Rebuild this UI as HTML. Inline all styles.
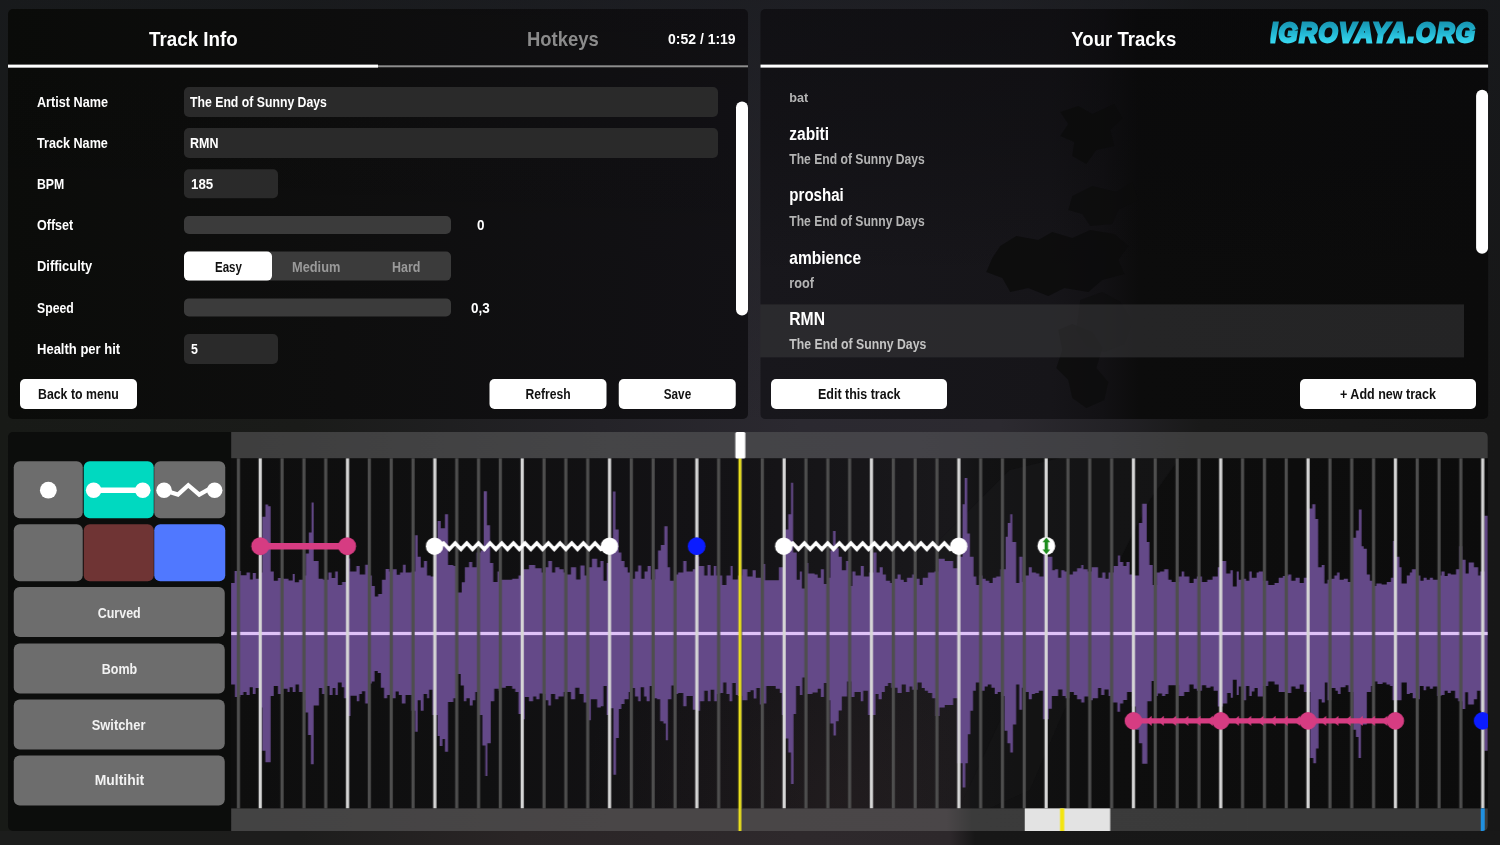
<!DOCTYPE html>
<html lang="en"><head><meta charset="utf-8"><title>Track Editor</title>
<style>
html,body{margin:0;padding:0}
body{width:1500px;height:845px;overflow:hidden;background:#1b1b1b;font-family:"Liberation Sans",sans-serif;font-weight:bold;position:relative}
#bg{position:absolute;left:0;top:0;width:1500px;height:845px;background:
 linear-gradient(180deg,rgba(24,26,30,.7) 0,rgba(24,26,30,.35) 200px,rgba(24,26,30,0) 425px),
 linear-gradient(90deg,#181a17 0,#1a1b19 300px,#242328 600px,#2b2930 800px,#2c2a30 1000px,#222125 1120px,#191919 1200px,#171717 1500px)}
#bgb{position:absolute;left:0;top:831px;width:1500px;height:14px;background:linear-gradient(90deg,#1c1d1c 0,#1d1d1c 300px,#2a2526 520px,#2e292c 800px,#2d282b 950px,#171717 975px,#181818 1500px)}
section,div,span.t,span.wm{position:absolute;box-sizing:border-box}
.panel{background:linear-gradient(180deg,rgba(0,0,0,.1) 0,rgba(0,0,0,0) 70%),linear-gradient(90deg,#0b0c0a 0,#0e0e0e 45%,#121115 100%);border-radius:5px;overflow:hidden}
.p2{background:linear-gradient(180deg,rgba(8,8,10,.45) 0,rgba(8,8,10,.3) 30%,rgba(8,8,10,0) 65%),linear-gradient(90deg,#18171c 0,#161519 40%,#121114 47%,#0c0c0c 52%,#0b0b0b 100%)}
.p3{background:#0c0d0c}
.t{white-space:nowrap;line-height:1;transform-origin:0 0;color:#fff;display:block}
.ln2{background:#8d8d8d}
.ln3{background:#fff}
.inp{background:#2a2a2a;border-radius:5px}
.sld{background:#3b3b3b;border-radius:5px}
.segs{background:#3b3b3b;border-radius:5px}
.seg.on{background:#fff;border-radius:5px}
.btn{background:#fff;border-radius:5px}
.scr{background:#fff;border-radius:6px}
.sel{background:rgba(58,58,60,.55)}
.tb{background:#6d6d6d;border-radius:6px}
.tb svg,.tree{position:absolute;left:0;top:0}
.tl svg{position:absolute;left:0;top:0}
.wm{font-style:italic;font-size:26.5px;line-height:1.3;letter-spacing:1.6px;white-space:nowrap;
 background:linear-gradient(180deg,#1896b2 22%,#22b4d0 50%,#38daf2 80%);-webkit-background-clip:text;background-clip:text;color:transparent;
 -webkit-text-stroke:2.6px transparent;transform-origin:0 0;transform:scale(.927,1.075)}
</style></head>
<body><div id="bg"></div><div id="bgb"></div>
<section class="panel" style="left:8px;top:9px;width:740px;height:410px;"><span class="t" style="left:140.75px;top:19.42px;font-size:21px;transform:scaleX(0.8948);">Track Info</span><span class="t" style="left:519.00px;top:19.42px;font-size:21px;color:#8b8b8b;transform:scaleX(0.8783);">Hotkeys</span><span class="t" style="left:660.00px;top:22.70px;font-size:14.3px;transform:scaleX(0.9783);">0:52 / 1:19</span><div class="ln2" style="left:0px;top:56px;width:740px;height:2px;transform:translate(0.00px,0.30px);"></div><div class="ln3" style="left:0px;top:55px;width:370px;height:3px;transform:translate(0.00px,0.60px);"></div><span class="t lab" style="left:29.20px;top:85.64px;font-size:14.6px;transform:scaleX(0.8658);">Artist Name</span><span class="t lab" style="left:29.20px;top:126.84px;font-size:14.6px;transform:scaleX(0.8651);">Track Name</span><span class="t lab" style="left:29.20px;top:168.04px;font-size:14.6px;transform:scaleX(0.8400);">BPM</span><span class="t lab" style="left:29.20px;top:209.24px;font-size:14.6px;transform:scaleX(0.8592);">Offset</span><span class="t lab" style="left:29.20px;top:250.44px;font-size:14.6px;transform:scaleX(0.8839);">Difficulty</span><span class="t lab" style="left:29.20px;top:291.64px;font-size:14.6px;transform:scaleX(0.8387);">Speed</span><span class="t lab" style="left:29.20px;top:332.84px;font-size:14.6px;transform:scaleX(0.8915);">Health per hit</span><div class="inp" style="left:176px;top:78px;width:534px;height:30px;"><span class="t" style="left:6.30px;top:7.64px;font-size:14.6px;transform:scaleX(0.8401);">The End of Sunny Days</span></div><div class="inp" style="left:176px;top:119px;width:534px;height:30px;"><span class="t" style="left:6.30px;top:7.74px;font-size:14.6px;transform:scaleX(0.8540);">RMN</span></div><div class="inp" style="left:176px;top:160px;width:94px;height:29px;transform:translate(0.00px,0.30px);"><span class="t" style="left:6.80px;top:7.64px;font-size:14.6px;transform:scaleX(0.9108);">185</span></div><div class="sld" style="left:176px;top:207px;width:267px;height:18px;"></div><span class="t" style="left:468.75px;top:209.24px;font-size:14.6px;transform:scaleX(0.9231);">0</span><div class="segs" style="left:176px;top:242px;width:267px;height:29px;transform:translate(0.00px,0.60px);"><div class="seg on" style="left:0px;top:0px;width:88px;height:29px;"><span class="t" style="left:30.50px;top:7.94px;font-size:14.6px;color:#111;transform:scaleX(0.7898);">Easy</span></div><span class="t" style="left:108.00px;top:7.94px;font-size:14.6px;color:#9a9a9a;transform:scaleX(0.8778);">Medium</span><span class="t" style="left:207.50px;top:7.94px;font-size:14.6px;color:#9a9a9a;transform:scaleX(0.8555);">Hard</span></div><div class="sld" style="left:176px;top:289px;width:267px;height:18px;transform:translate(0.00px,0.40px);"></div><span class="t" style="left:463.25px;top:291.64px;font-size:14.6px;transform:scaleX(0.9231);">0,3</span><div class="inp" style="left:176px;top:325px;width:94px;height:30px;"><span class="t" style="left:6.60px;top:7.74px;font-size:14.6px;transform:scaleX(0.8492);">5</span></div><div class="btn" style="left:12px;top:370px;width:117px;height:30px;"><span class="t" style="left:18.00px;top:7.84px;font-size:14.6px;color:#111;transform:scaleX(0.8449);">Back to menu</span></div><div class="btn" style="left:481px;top:370px;width:117px;height:30px;transform:translate(0.50px,0.00px);"><span class="t" style="left:36.00px;top:7.84px;font-size:14.6px;color:#111;transform:scaleX(0.8312);">Refresh</span></div><div class="btn" style="left:610px;top:370px;width:117px;height:30px;transform:translate(0.75px,0.00px);"><span class="t" style="left:45.00px;top:7.84px;font-size:14.6px;color:#111;transform:scaleX(0.8044);">Save</span></div><div class="scr" style="left:728px;top:92px;width:12px;height:214px;transform:translate(0.00px,0.60px);"></div></section>
<section class="panel p2" style="left:760px;top:9px;width:728px;height:410px;transform:translate(0.30px,0.00px);"><span class="t" style="left:310.95px;top:19.42px;font-size:21px;transform:scaleX(0.8847);">Your Tracks</span><div class="ln3" style="left:0px;top:55px;width:728px;height:3px;transform:translate(0.00px,0.60px);"></div><span class="wm" style="left:509.70000000000005px;top:5.1px;">IGROVAYA.ORG</span><svg class="tree" width="727.5" height="410" viewBox="760 9 727.5 410"><g fill="#0c0c0c"><path d="M1060 112l18-6 14 8 22-10 8 14-12 12 4 16-18 4-10 14-14-8 2-14-14-6 8-12z" opacity=".85"/><path d="M1072 196l20-10 24 6 16-10 6 18-20 10-6 14-22 2-8-12-14-4z" opacity=".8"/><path d="M1000 246l16-10 22 4 14-8 20 6 18-8 24 4 14 12-10 14 6 14-22 6-14 12-24-4-16 8-20-8-18 4-8-14-16-6 6-14z" opacity=".85"/><path d="M1080 300l22-8 18 10 12 20-8 22-20 8-18-6-10-16z" opacity=".5"/><path d="M1058 330l14-6 20 8 10 16-6 20 12 14-4 18-18 8-14-10-4-18-12-12 6-18z" opacity=".8"/></g></svg><div class="sel" style="left:-1px;top:295px;width:704px;height:53px;transform:translate(0.70px,0.40px);"></div><span class="t" style="left:28.95px;top:82.31px;font-size:13.1px;color:#b4b4b4;transform:scaleX(0.9651);">bat</span><span class="t" style="left:28.70px;top:115.76px;font-size:18px;transform:scaleX(0.8641);">zabiti</span><span class="t" style="left:28.70px;top:142.78px;font-size:14.2px;color:#b4b4b4;transform:scaleX(0.8552);">The End of Sunny Days</span><span class="t" style="left:28.70px;top:177.16px;font-size:18px;transform:scaleX(0.8385);">proshai</span><span class="t" style="left:28.70px;top:204.98px;font-size:14.2px;color:#b4b4b4;transform:scaleX(0.8552);">The End of Sunny Days</span><span class="t" style="left:28.70px;top:239.66px;font-size:18px;transform:scaleX(0.8638);">ambience</span><span class="t" style="left:28.70px;top:266.68px;font-size:14.2px;color:#b4b4b4;transform:scaleX(0.8939);">roof</span><span class="t" style="left:29.00px;top:301.26px;font-size:18px;transform:scaleX(0.8707);">RMN</span><span class="t" style="left:29.20px;top:328.28px;font-size:14.2px;color:#c4c4c4;transform:scaleX(0.8647);">The End of Sunny Days</span><div class="btn" style="left:10px;top:370px;width:176px;height:30px;transform:translate(0.70px,0.00px);"><span class="t" style="left:47.00px;top:7.84px;font-size:14.6px;color:#111;transform:scaleX(0.8553);">Edit this track</span></div><div class="btn" style="left:539px;top:370px;width:176px;height:30px;transform:translate(0.70px,0.00px);"><span class="t" style="left:40.00px;top:7.84px;font-size:14.6px;color:#111;transform:scaleX(0.8589);">+ Add new track</span></div><div class="scr" style="left:715px;top:80px;width:12px;height:164px;transform:translate(0.80px,0.70px);"></div></section>
<section class="panel p3" style="left:8px;top:432px;width:1480px;height:399px;"><div class="tb" style="left:5px;top:29px;width:69px;height:57px;transform:translate(0.75px,0.20px);"><svg width="70" height="57" viewBox="0 0 70 57"><circle cx="34.6" cy="29" r="8.4" fill="#fff"/></svg></div><div class="tb" style="left:75px;top:29px;width:70px;height:57px;transform:translate(0.75px,0.20px);background:#00d9c0;"><svg width="70" height="57" viewBox="0 0 70 57"><path d="M10 29H59" stroke="#fff" stroke-width="5.4"/><circle cx="9.9" cy="29" r="7.8" fill="#fff"/><circle cx="59" cy="29" r="7.8" fill="#fff"/></svg></div><div class="tb" style="left:146px;top:29px;width:71px;height:57px;transform:translate(0.25px,0.20px);"><svg width="71" height="57" viewBox="0 0 71 57"><path d="M9.8 29L23.7 33.4L34 24L45 33.4L53.8 28.4L60.4 29" stroke="#fff" stroke-width="4.2" fill="none" stroke-linejoin="miter"/><circle cx="9.8" cy="29" r="7.8" fill="#fff"/><circle cx="60.4" cy="29" r="7.8" fill="#fff"/></svg></div><div class="tb" style="left:5px;top:92px;width:69px;height:57px;transform:translate(0.75px,0.20px);"></div><div class="tb" style="left:75px;top:92px;width:70px;height:57px;transform:translate(0.75px,0.20px);background:#6f3434;"></div><div class="tb" style="left:146px;top:92px;width:71px;height:57px;transform:translate(0.25px,0.20px);background:#5078ff;"></div><div class="tb wb" style="left:5px;top:155px;width:211px;height:50px;transform:translate(0.75px,0.00px);"><span class="t" style="left:84.00px;top:18.64px;font-size:14.6px;color:#f2f2f2;transform:scaleX(0.8536);">Curved</span></div><div class="tb wb" style="left:5px;top:211px;width:211px;height:50px;transform:translate(0.75px,0.50px);"><span class="t" style="left:87.50px;top:18.44px;font-size:14.6px;color:#f2f2f2;transform:scaleX(0.8567);">Bomb</span></div><div class="tb wb" style="left:5px;top:267px;width:211px;height:50px;transform:translate(0.75px,0.50px);"><span class="t" style="left:78.25px;top:18.34px;font-size:14.6px;color:#f2f2f2;transform:scaleX(0.8821);">Switcher</span></div><div class="tb wb" style="left:5px;top:323px;width:211px;height:50px;transform:translate(0.75px,0.40px);"><span class="t" style="left:80.50px;top:18.44px;font-size:14.6px;color:#f2f2f2;transform:scaleX(0.9519);">Multihit</span></div><div class="tl" style="left:223.25px;top:0;width:1256.75px;height:399px"><svg width="1256.75" height="399.0" viewBox="231.25 432.0 1256.75 399.0"><defs><linearGradient id="gw" gradientUnits="userSpaceOnUse" x1="231" x2="1488" y1="0" y2="0"><stop offset="0" stop-color="#0e0e0e"/><stop offset=".2" stop-color="#101011"/><stop offset=".37" stop-color="#131215"/><stop offset=".5" stop-color="#171619"/><stop offset=".575" stop-color="#19181b"/><stop offset=".6" stop-color="#121213"/><stop offset=".7" stop-color="#0e0e0e"/><stop offset="1" stop-color="#0c0c0c"/></linearGradient><radialGradient id="gr" gradientUnits="userSpaceOnUse" cx="840" cy="800" r="260" gradientTransform="translate(0 160) scale(1 .8)"><stop offset="0" stop-color="#3a2c2c" stop-opacity=".28"/><stop offset="1" stop-color="#3a2c2c" stop-opacity="0"/></radialGradient></defs><rect x="231.25" y="432.0" width="1256.75" height="399.0" fill="url(#gw)"/><rect x="560" y="458.2" width="410" height="350.2" fill="url(#gr)"/><g fill="#1c1c1e" opacity=".9"><path d="M940 540 L975 505 L1010 470 L1060 458 L1180 458 L1150 500 L1120 560 L1090 620 L1060 634 L960 634 L930 600Z" opacity=".55"/><path d="M1010 700L1040 640L1100 634L1060 720L1030 790L990 808L960 808Z" opacity=".35"/></g><path fill="#644988" d="M231.2 633V582.9V582.9H234.8V571H241.1V575.2H246.7V572.4H250.3V579.4H253V573.1H256.2V578.7H259.3V572.4H262.5V516.8H265.6V504.6H268.4V506.3H270.9V571.4H274V580.8H278.2V578.1H283.9V578.7H288.7V580.4H292.9V573.9H295V582.3H299.2V579.8H303.4V575.6H306.2V553.5H309.1V532.5H311.8V502.5H313.9V560.9H318.8V578.7H323.4V579.8H328.6V572.4H331.8V578.1H335.4V571.4H338.1V585H342.3V581.9H346.1V558.4H350.3V571.4H356.6V566.1H359.9V574.5H365.4V564.7H368.5V575.6H372.1V586.1H375.1V596.6H378.4V594.1H382.2V579.8H385.8V568.9H389.5V571.4H393.1V569.3H396.9V574.8H400.3V572.4H403.2V564.7H405.9V572.4H411.6V571.4H415.4V535.3H417.9V556.7H421V567.6H424.2V560.9H427.3V575.6H430.9V576.6H434.3V554.6H437.8V521H441V528.3H445.2V514.3H448.3V565.1H453.6V566.1H457.8V592.4H462V582.3H465.1V567.2H469.3V561.9H472.5V567.2H476.7V552.5H480.9V550.4H484V491.2H487.2V525.2H490.3V563H493.5V581.9H497.7V571.4H501.9V579.8H512.4V578.7H518.7V575.6H523.9V569.3H529.2V565.1H535.5V568.2H541.8V572.4H546V567.2H548.5V560.9H552.3V572.4H555.4V567.2H559.6V569.3H563.8V572.4H567V574.5H571.2V567.2H576.4V579.4H580.6V565.5H584.8V575.6H588V567.2H592.2V558.8H597.4V567.2H600.6V560.9H603.7V580.8H606.9V563H610V550.4H613.2V491.6H615.7V529.4H618.9V552.5H621.6V560.9H624.7V567.2H627.9V572.4H632.1V578.7H635.2V571.4H638.4V565.5H641.5V578.7H644.7V571.4H647.8V566.1H651V579.4H655.2V569.3H658.3V550.4H661.1V545.1H664.6V526.2H667.8V567.2H670.3V580.8H674.1V574.5H678.3V572.4H683.5V560.9H686.7V571.4H693V569.3H695.5V556.7H699.3V566.1H704.5V575.6H707.7V565.1H710.8V575.6H714V566.1H716.5V575.6H722.4V585H726.6V575.6H730.8V566.1H732.9V579.4H738.1V575.6H742.3V569.3H747.6V576.6H752.8V570.3H756V577.7H762.3V564H765.4V580.2H779.1V567.2H785.4V529.4H788.5V514.3H791.3V482.8H793.4V552.5H796.9V579.8H800.1V571.4H802.2V588.6H805.3V563H808.5V573.5H814.8V574.5H817.9V577.7H821.1V569.3H824.2V584H827.4V577.7H830.5V550.4H833.3V531.1H835.8V548.3H838.9V556.7H842.1V570.3H846.3V560.9H849.4V586.1H852.6V571.4H855.7V575.6H861V566.1H864.1V576.6H869.4V572.4H873.6V552.5H876.7V572.4H879.9V567.2H883V574.5H886.2V580.8H890.4V582.9H894.6V578.7H897.7V574.5H900.9V579.8H904V581.9H907.2V577.7H912.4V574.5H916.6V578.7H919.8V585H922.9V577.7H928.2V572.4H934.5V571.4H938.7V558.8H945V560.9H953.4V568.2H957.6V556.7H962.8V504.2H964.9V477.9H967.5V533.6H970.2V556.7H973.8V576.6H976.5V585H979.6V575.6H982.8V578.7H985.9V580.8H989.5V582.9H992.9V577.7H996.4V576.6H1000.6V569.3H1005.9V536.7H1008V523.1H1010.5V514.3H1012.6V542H1016.4V582.9H1019.5V556.7H1022.7V581.9H1025.8V575.6H1029V567.2H1032.1V572.4H1036.3V573.5H1039.5V576.6H1043.7V550.4H1047.9V556.7H1052.5V570.3H1055.2V569.3H1058.4V577.7H1061.5V570.3H1064.7V571.4H1068.9V574.5H1073.1V571.4H1077.3V568.2H1081.5V565.1H1083.6V569.3H1087.8V571.4H1092V567.2H1098.3V577.7H1102.5V572.4H1105.6V578.7H1108.8V572.4H1114V566.1H1118.2V555.6H1120.3V561.9H1123.5V566.1H1126.6V561.9H1129.8V574.5H1134V575.6H1139.2V523.1H1142.4V503.8H1147V542H1149.7V565.1H1152.9V585H1157.1V572.4H1160.2V571.4H1164.4V569.3H1168.6V579.8H1171.8V581.9H1176V581.9H1179.1V576.6H1181.9V571.4H1184.4V576.6H1189.6V582.9H1193.8V578.7H1197V576.6H1202.2V581.9H1207.5V579.8H1212.7V576.6H1218V567.2H1221.1V560.9H1226.4V573.5H1230.6V570.3H1233.1V586.5H1236.9V571.4H1239V579.8H1242.1V578.7H1246.3V580.8H1249.5V571.4H1252V577.7H1256.8V572.4H1258.9V571.4H1263.1V580.8H1268.4V585H1274.7V582.9H1278.9V577.7H1283.1V576H1288.3V574.5H1291.5V580.8H1295.7V577.7H1299.9V582.9H1304.1V577.7H1309.3V508.4H1312.5V504.2H1315.6V518.9H1318.4V567.2H1321.9V565.1H1324.7V583.6H1327.6V579.8H1331.4V578.7H1334.5V575.6H1337.3V572.4H1339.8V579.8H1344V578.7H1348.2V581.9H1352.4V537.8H1356.2V530.4H1359.1V509.4H1361.8V546.2H1363.9V548.7H1367.1V574.5H1370.2V580.8H1373.4V586.1H1376.5V583.4H1381.8V584.6H1387V581.9H1391.2V577.7H1393.3V540.9H1396.5V556.7H1399.6V567.2H1401.7V583.6H1407V575.6H1410.1V572.4H1412.2V569.3H1417.5V575.6H1420.6V580.8H1423.8V577.7H1426.9V579.8H1430.1V577.7H1433.2V579.8H1438.5V575.6H1441.6V571.4H1444.8V576H1447.9V573.5H1451.1V574.5H1456.3V569.3H1459.5V546.2H1462.6V559.8H1465.8V573.5H1468.9V562.6H1474.2V567.2H1478.4V575.6H1480.5V571.4H1484.7V515.7H1487.8V633V750.7H1484.7V710.8H1480.5V690.8H1477.3V699.2H1474.2V704.5H1468.3V692.3H1465.4V709.1H1462.6V701.3H1458.4V698.2H1455.3V690.8H1451.1V692.9H1447.9V690.8H1444.8V695H1441.6V696.1H1437.4V686.6H1433.2V688.7H1430.1V686.6H1426.3V690.2H1423.8V686H1420V699.2H1416.4V698.2H1412.9V692.9H1410.1V694H1407V682.4H1401.7V700.3H1399.6V700.3H1392.7V686H1390.2V684.5H1386.6V682.4H1382.8V683.9H1377.6V681.4H1374.4V686H1371.3V691.9H1367.1V724.4H1361.2V758H1358.7V737H1356.2V729.7H1353.4V691.9H1348.6V685.2H1345.7V687.3H1340.8V694H1338.1V690.8H1335.6V688.1H1331.8V700.3H1327.6V682.4H1325.1V702.4H1321.9V699.2H1318.8V748.6H1316.3V763.3H1313.5V758H1310.4V691.9H1304.1V684.5H1299.9V688.7H1295.7V686.6H1291.5V692.9H1287.3V691.9H1282V691.9H1278.9V684.5H1274.7V681.4H1268.4V686H1263.1V696.5H1257.9V688.1H1254.7V691.5H1252V696.1H1249.5V686H1246.3V700.3H1242.1V686.6H1239V695H1236.9V679.7H1233.1V697.8H1231V692.9H1227.4V703.4H1223.2V706.6H1218V690.8H1213.8V686.6H1210.6V687.7H1206.4V685.2H1202.2V690.8H1197V688.7H1193.8V684.5H1189.6V691.9H1184.4V696.1H1179.1V685.2H1176V685.2H1168.6V694H1165.5V696.1H1162.3V693.6H1158.1V696.1H1155V681H1151.8V701.3H1147.6V763.7H1142.4V743.3H1139.2V729.7H1136.1V706.6H1131.9V691.9H1127.3V699.9H1123.5V703.4H1120.3V711.8H1117.6V702.4H1113V696.1H1108.8V689.4H1104.6V695H1101.4V688.1H1098.3V698.2H1093V700.3H1088.8V696.5H1084.6V702.4H1081.5V699.2H1077.3V695H1074.1V691.9H1069.9V698.2H1065.7V696.1H1062.6V689.4H1058.4V696.1H1052.1V708.7H1048.9V719.2H1043.3V690.8H1039.1V692.9H1035.3V694H1032.1V699.2H1029V691.9H1025.8V687.7H1022.3V709.7H1019.5V684.5H1016.4V724.4H1013.2V752.4H1010.5V743.3H1007.6V730.7H1004.8V696.1H1001.3V691.9H997.9V694H995V687.7H991.6V684.5H988V686.6H984.9V690.8H980.7V682.4H976.1V690.8H973.3V710.8H970.6V734.3H968.1V763.3H965.6V787.4H962.8V763.3H957.6V698.2H953.4V704.9H945V707.6H939.7V716H935.5V698.2H932.4V692.9H928.2V690.8H925V688.1H921.9V682.4H917.7V689.8H912.4V686.6H909.7V691.9H906.1V684.5H901.9V692.9H897.7V687.7H894.6V687.7H891.4V683.1H888.3V686H885.1V691.9H882V699.2H878.8V694H875.7V715H868.3V690.8H863.5V701.3H861V691.9H854.7V697.1H851.5V681.4H847.3V696.5H842.1V710.4H838.9V721.3H836.2V735.6H833.7V723.4H830.5V700.3H827V683.1H824.2V697.1H821.1V688.7H817.9V692.5H812.7V694H809.5V694H806V677.6H802.6V695H800.1V686H796.3V713.9H793.8V783.9H791.3V752.4H788.5V738.5H785.4V715H782.2V692.9H780.1V688.7H775.9V686H766.5V703.4H763.3V704.5H760.2V688.1H756.6V698.6H753.9V690.2H750.7V691.9H747.6V700.3H742.3V696.1H738.1V695H736V683.1H732.5V701.3H729.7V694H726.6V682.4H723.4V692.9H720.3V694H717.1V701.3H714.4V689.8H710.8V701.3H708.1V690.8H704.5V701.3H700.3V710.8H696.1V709.7H693V696.1H686.7V706.2H683.5V692.9H678.3V694H674.1V685.6H671.6V699.2H668.2V740.2H666.1V723.4H663.6V721.3H660.4V699.2H657.3V698.2H653.1V686H649.9V701.3H646.8V696.5H644.3V687.3H640.9V701.3H638.4V696.5H635.2V688.1H632.1V691.9H628.9V699.2H624.7V704.1H621.6V709.1H619.1V738.1H616.3V774.8H613.6V708.3H611.1V715H606.9V686H603.7V706.2H601V707.6H597.4V699.2H591.1V720.2H586.9V702.4H583.8V694H579.6V687.7H575.4V699.2H571.2V691.9H568V691.9H563.8V696.5H558.6V699.2H555.4V694H551.2V705.5H548.5V700.3H546V694H542.8V693.4H539.7V699.2H536.5V696.5H533.4V701.3H529.2V697.1H525V719.2H521.8V713.9H518.7V691.9H515.5V688.7H512.4V686H506.1V687.7H501.9V690.8H498.7V688.7H494.5V701.3H491V743.3H487.6V775.9H485.5V745.4H482.6V715H479.8V691.9H475.6V700.3H472.9V705.5H470V698.2H466.6V701.3H464.1V685.6H460.9V674H457.8V698.2H453.6V702H448.3V751.7H445.2V739.1H442.7V746.1H439.9V736H437.8V715H432.6V689.8H429.4V698.2H427.3V694H423.8V710.8H421V700.3H417.9V731.8H415.4V710.8H411.6V695H405.7V703.4H402.1V695H399V691.5H395.8V698.2H390.6V695H387.4V698.2H384.3V687.7H381.1V673H378V670.9H374.8V681.4H372.1V683.5H368.5V703.4H365.4V691.3H362.2V694H359.5V701.3H357V695.7H350.7V716H348.6V698.2H344.4V687.3H341.9V682.4H338.1V695H335.6V688.1H332.8V695H329.7V686H326.5V694H322.3V688.1H319.2V705.5H313.9V764.3H311.2V734.9H308.3V712.5H305.5V700.3H303.4V691.9H299.2V684.5H295.7V691.9H292.9V687.3H289.8V691.9H287.7V688.7H283.5V694H278.2V686H274V696.1H270.9V762.2H265.6V750.7H262.5V707.6H259.3V688.1H255.8V694H253V687.3H249.9V695H246.7V691.9H243.6V695H240.4V697.1H235.2V684.5H231.2Z"/><rect x="231.25" y="631.9" width="1256.75" height="3.2" fill="#dfc2f8"/><path stroke="#4e4e4e" stroke-width="3.2" d="M238.7 458.2V808.4M282.3 458.2V808.4M304.2 458.2V808.4M326 458.2V808.4M369.6 458.2V808.4M391.5 458.2V808.4M413.3 458.2V808.4M457 458.2V808.4M478.8 458.2V808.4M500.6 458.2V808.4M544.3 458.2V808.4M566.1 458.2V808.4M588 458.2V808.4M631.6 458.2V808.4M653.4 458.2V808.4M675.3 458.2V808.4M718.9 458.2V808.4M740.8 458.2V808.4M762.6 458.2V808.4M806.2 458.2V808.4M828.1 458.2V808.4M849.9 458.2V808.4M893.6 458.2V808.4M915.4 458.2V808.4M937.2 458.2V808.4M980.9 458.2V808.4M1002.7 458.2V808.4M1024.5 458.2V808.4M1068.2 458.2V808.4M1090 458.2V808.4M1111.9 458.2V808.4M1155.5 458.2V808.4M1177.4 458.2V808.4M1199.2 458.2V808.4M1242.8 458.2V808.4M1264.7 458.2V808.4M1286.5 458.2V808.4M1330.2 458.2V808.4M1352 458.2V808.4M1373.8 458.2V808.4M1417.5 458.2V808.4M1439.3 458.2V808.4M1461.1 458.2V808.4"/><path stroke="#d6d6d6" stroke-width="3.2" d="M260.5 458.2V808.4M347.8 458.2V808.4M435.1 458.2V808.4M522.5 458.2V808.4M609.8 458.2V808.4M697.1 458.2V808.4M784.4 458.2V808.4M871.7 458.2V808.4M959.1 458.2V808.4M1046.4 458.2V808.4M1133.7 458.2V808.4M1221 458.2V808.4M1308.3 458.2V808.4M1395.7 458.2V808.4M1483 458.2V808.4"/><defs><linearGradient id="gt" gradientUnits="userSpaceOnUse" x1="231" x2="1488" y1="0" y2="0"><stop offset="0" stop-color="#3e3e3e"/><stop offset=".3" stop-color="#454547"/><stop offset=".55" stop-color="#444348"/><stop offset=".7" stop-color="#3f3f42"/><stop offset=".77" stop-color="#3b3b3b"/><stop offset="1" stop-color="#3b3b3b"/></linearGradient><linearGradient id="gb" gradientUnits="userSpaceOnUse" x1="231" x2="1488" y1="0" y2="0"><stop offset="0" stop-color="#434343"/><stop offset=".3" stop-color="#494647"/><stop offset=".57" stop-color="#4a4648"/><stop offset=".59" stop-color="#3b3b3b"/><stop offset="1" stop-color="#3a3a3a"/></linearGradient></defs><rect x="231.25" y="432.0" width="1256.75" height="26.2" fill="url(#gt)"/><rect x="231.25" y="808.4" width="1256.75" height="22.6" fill="url(#gb)"/><path d="M260.5 546.2H347.4" stroke="#d63c82" stroke-width="6.4"/><circle cx="260.5" cy="546.2" r="8.95" fill="#d63c82"/><circle cx="347.4" cy="546.2" r="8.95" fill="#d63c82"/><path d="M434.8 546.2L443.7 543.1L449.5 549.3L455.4 543.1L461.2 549.3L467 543.1L472.8 549.3L478.7 543.1L484.5 549.3L490.3 543.1L496.2 549.3L502 543.1L507.8 549.3L513.7 543.1L519.5 549.3L525.3 543.1L531.1 549.3L537 543.1L542.8 549.3L548.6 543.1L554.5 549.3L560.3 543.1L566.1 549.3L572 543.1L577.8 549.3L583.6 543.1L589.4 549.3L595.3 543.1L601.1 549.3L609.7 546.2" stroke="#fff" stroke-width="3.6" fill="none" stroke-linejoin="miter"/><circle cx="434.8" cy="546.2" r="8.7" fill="#fff"/><circle cx="609.7" cy="546.2" r="8.7" fill="#fff"/><path d="M784 546.2L792.9 543.1L798.7 549.3L804.6 543.1L810.4 549.3L816.2 543.1L822.1 549.3L827.9 543.1L833.7 549.3L839.6 543.1L845.4 549.3L851.2 543.1L857.1 549.3L862.9 543.1L868.7 549.3L874.6 543.1L880.4 549.3L886.2 543.1L892.1 549.3L897.9 543.1L903.7 549.3L909.6 543.1L915.4 549.3L921.2 543.1L927.1 549.3L932.9 543.1L938.7 549.3L944.6 543.1L950.4 549.3L959 546.2" stroke="#fff" stroke-width="3.6" fill="none" stroke-linejoin="miter"/><circle cx="784" cy="546.2" r="8.7" fill="#fff"/><circle cx="959" cy="546.2" r="8.7" fill="#fff"/><circle cx="696.9" cy="546.2" r="8.9" fill="#0b1cff"/><circle cx="1046.6" cy="545.9" r="8.9" fill="#fff"/><path fill="#1c8c1c" d="M1046.6 537.6l3.8 4.7h-2.1v7.2h2.1l-3.8 4.7l-3.8 -4.7h2.1v-7.2h-2.1z"/><path d="M1133.7 720.9H1395.6" stroke="#d63c82" stroke-width="5.2"/><path fill="#d63c82" d="M1146.3 720.9l5.6 -5.2v10.4zM1158.5 720.9l5.6 -5.2v10.4zM1170.7 720.9l5.6 -5.2v10.4zM1182.9 720.9l5.6 -5.2v10.4zM1195.1 720.9l5.6 -5.2v10.4zM1207.3 720.9l5.6 -5.2v10.4zM1233.6 720.9l5.6 -5.2v10.4zM1245.8 720.9l5.6 -5.2v10.4zM1258 720.9l5.6 -5.2v10.4zM1270.2 720.9l5.6 -5.2v10.4zM1282.4 720.9l5.6 -5.2v10.4zM1294.6 720.9l5.6 -5.2v10.4zM1320.8 720.9l5.6 -5.2v10.4zM1333 720.9l5.6 -5.2v10.4zM1345.2 720.9l5.6 -5.2v10.4zM1357.4 720.9l5.6 -5.2v10.4zM1369.6 720.9l5.6 -5.2v10.4zM1381.8 720.9l5.6 -5.2v10.4z"/><circle cx="1133.7" cy="720.9" r="8.8" fill="#d63c82"/><circle cx="1221.0" cy="720.9" r="8.8" fill="#d63c82"/><circle cx="1308.2" cy="720.9" r="8.8" fill="#d63c82"/><circle cx="1395.6" cy="720.9" r="8.8" fill="#d63c82"/><circle cx="1482.8" cy="720.9" r="8.8" fill="#0b1cff"/><rect x="1025" y="808.4" width="85.5" height="22.6" fill="#e3e3e3"/><rect x="1060.3" y="808.4" width="4.2" height="22.6" fill="#f3e510"/><rect x="1481" y="808.4" width="4" height="22.6" fill="#2090e0"/><rect x="738.7" y="458.2" width="2.9" height="372.8" fill="#ece21c"/><rect x="735.6" y="432" width="10" height="26.4" rx="1.5" fill="#fff"/></svg></div></section>
</body></html>
